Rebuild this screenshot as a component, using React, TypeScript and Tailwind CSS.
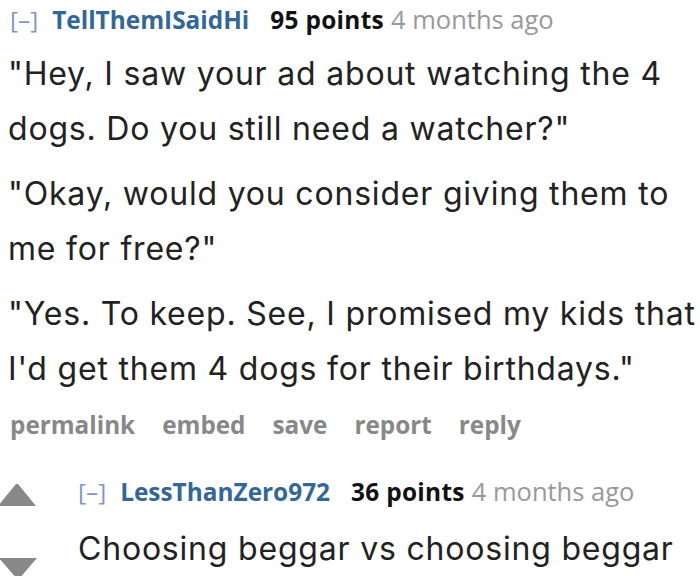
const headFont = { fontFamily: '"Open Sans", "Noto Sans", sans-serif' }
const bodyFont = { fontFamily: 'Inter, "Open Sans", sans-serif' }

function Header({ user, points }: { user: string; points: number }) {
  return (
    <div className="flex items-baseline text-[24.4px] leading-[34px] whitespace-nowrap" style={headFont}>
      <span className="text-[#7f97c2] font-normal mr-[14px]">[–]</span>
      <span className="text-[#336699] font-bold mr-[21px]">{user}</span>
      <span className="text-[#111] font-bold tracking-[0.3px] mr-[7px]">{points} points</span>
      <span className="text-[#999] text-[25.5px]">4 months ago</span>
    </div>
  )
}

export default function App() {
  return (
    <div className="w-[700px] h-[576px] overflow-hidden bg-white">
      <div className="pl-[8px] pt-[2px]">
        <div className="pl-[2px]">
          <Header user="TellThemISaidHi" points={95} />
        </div>
        <div
          className="w-[692px] text-[32px] leading-[55px] tracking-[0.8px] text-[#222] mt-[9px]"
          style={bodyFont}
        >
          <p>"Hey, I saw your ad about watching the 4 dogs. Do you still need a watcher?"</p>
          <p className="mt-[10px]">"Okay, would you consider giving them to me for free?"</p>
          <p className="mt-[10px]">"Yes. To keep. See, I promised my kids that I'd get them 4 dogs for their birthdays."</p>
        </div>
        <div
          className="flex gap-[27px] pl-[2px] text-[24.3px] leading-[34px] font-bold text-[#888] mt-[12px]"
          style={headFont}
        >
          <span>permalink</span>
          <span>embed</span>
          <span>save</span>
          <span>report</span>
          <span>reply</span>
        </div>
      </div>
      <div className="flex mt-[32px]">
        <div className="w-[78px] shrink-0 flex flex-col pt-[10px]">
          <svg width="40" height="22" viewBox="0 0 40 22" className="-ml-[2px]">
            <polygon points="18,0 20,0 38,22 0,22" fill="#888" />
          </svg>
          <svg width="40" height="22" viewBox="0 0 40 22" className="mt-[52px] -ml-[2px] shrink-0">
            <polygon points="1,0 39,0 20,22" fill="#888" />
          </svg>
        </div>
        <div>
          <Header user="LessThanZero972" points={36} />
          <p className="text-[32px] leading-[55px] tracking-[0.8px] text-[#222] mt-[12px]" style={bodyFont}>
            Choosing beggar vs choosing beggar
          </p>
        </div>
      </div>
    </div>
  )
}
